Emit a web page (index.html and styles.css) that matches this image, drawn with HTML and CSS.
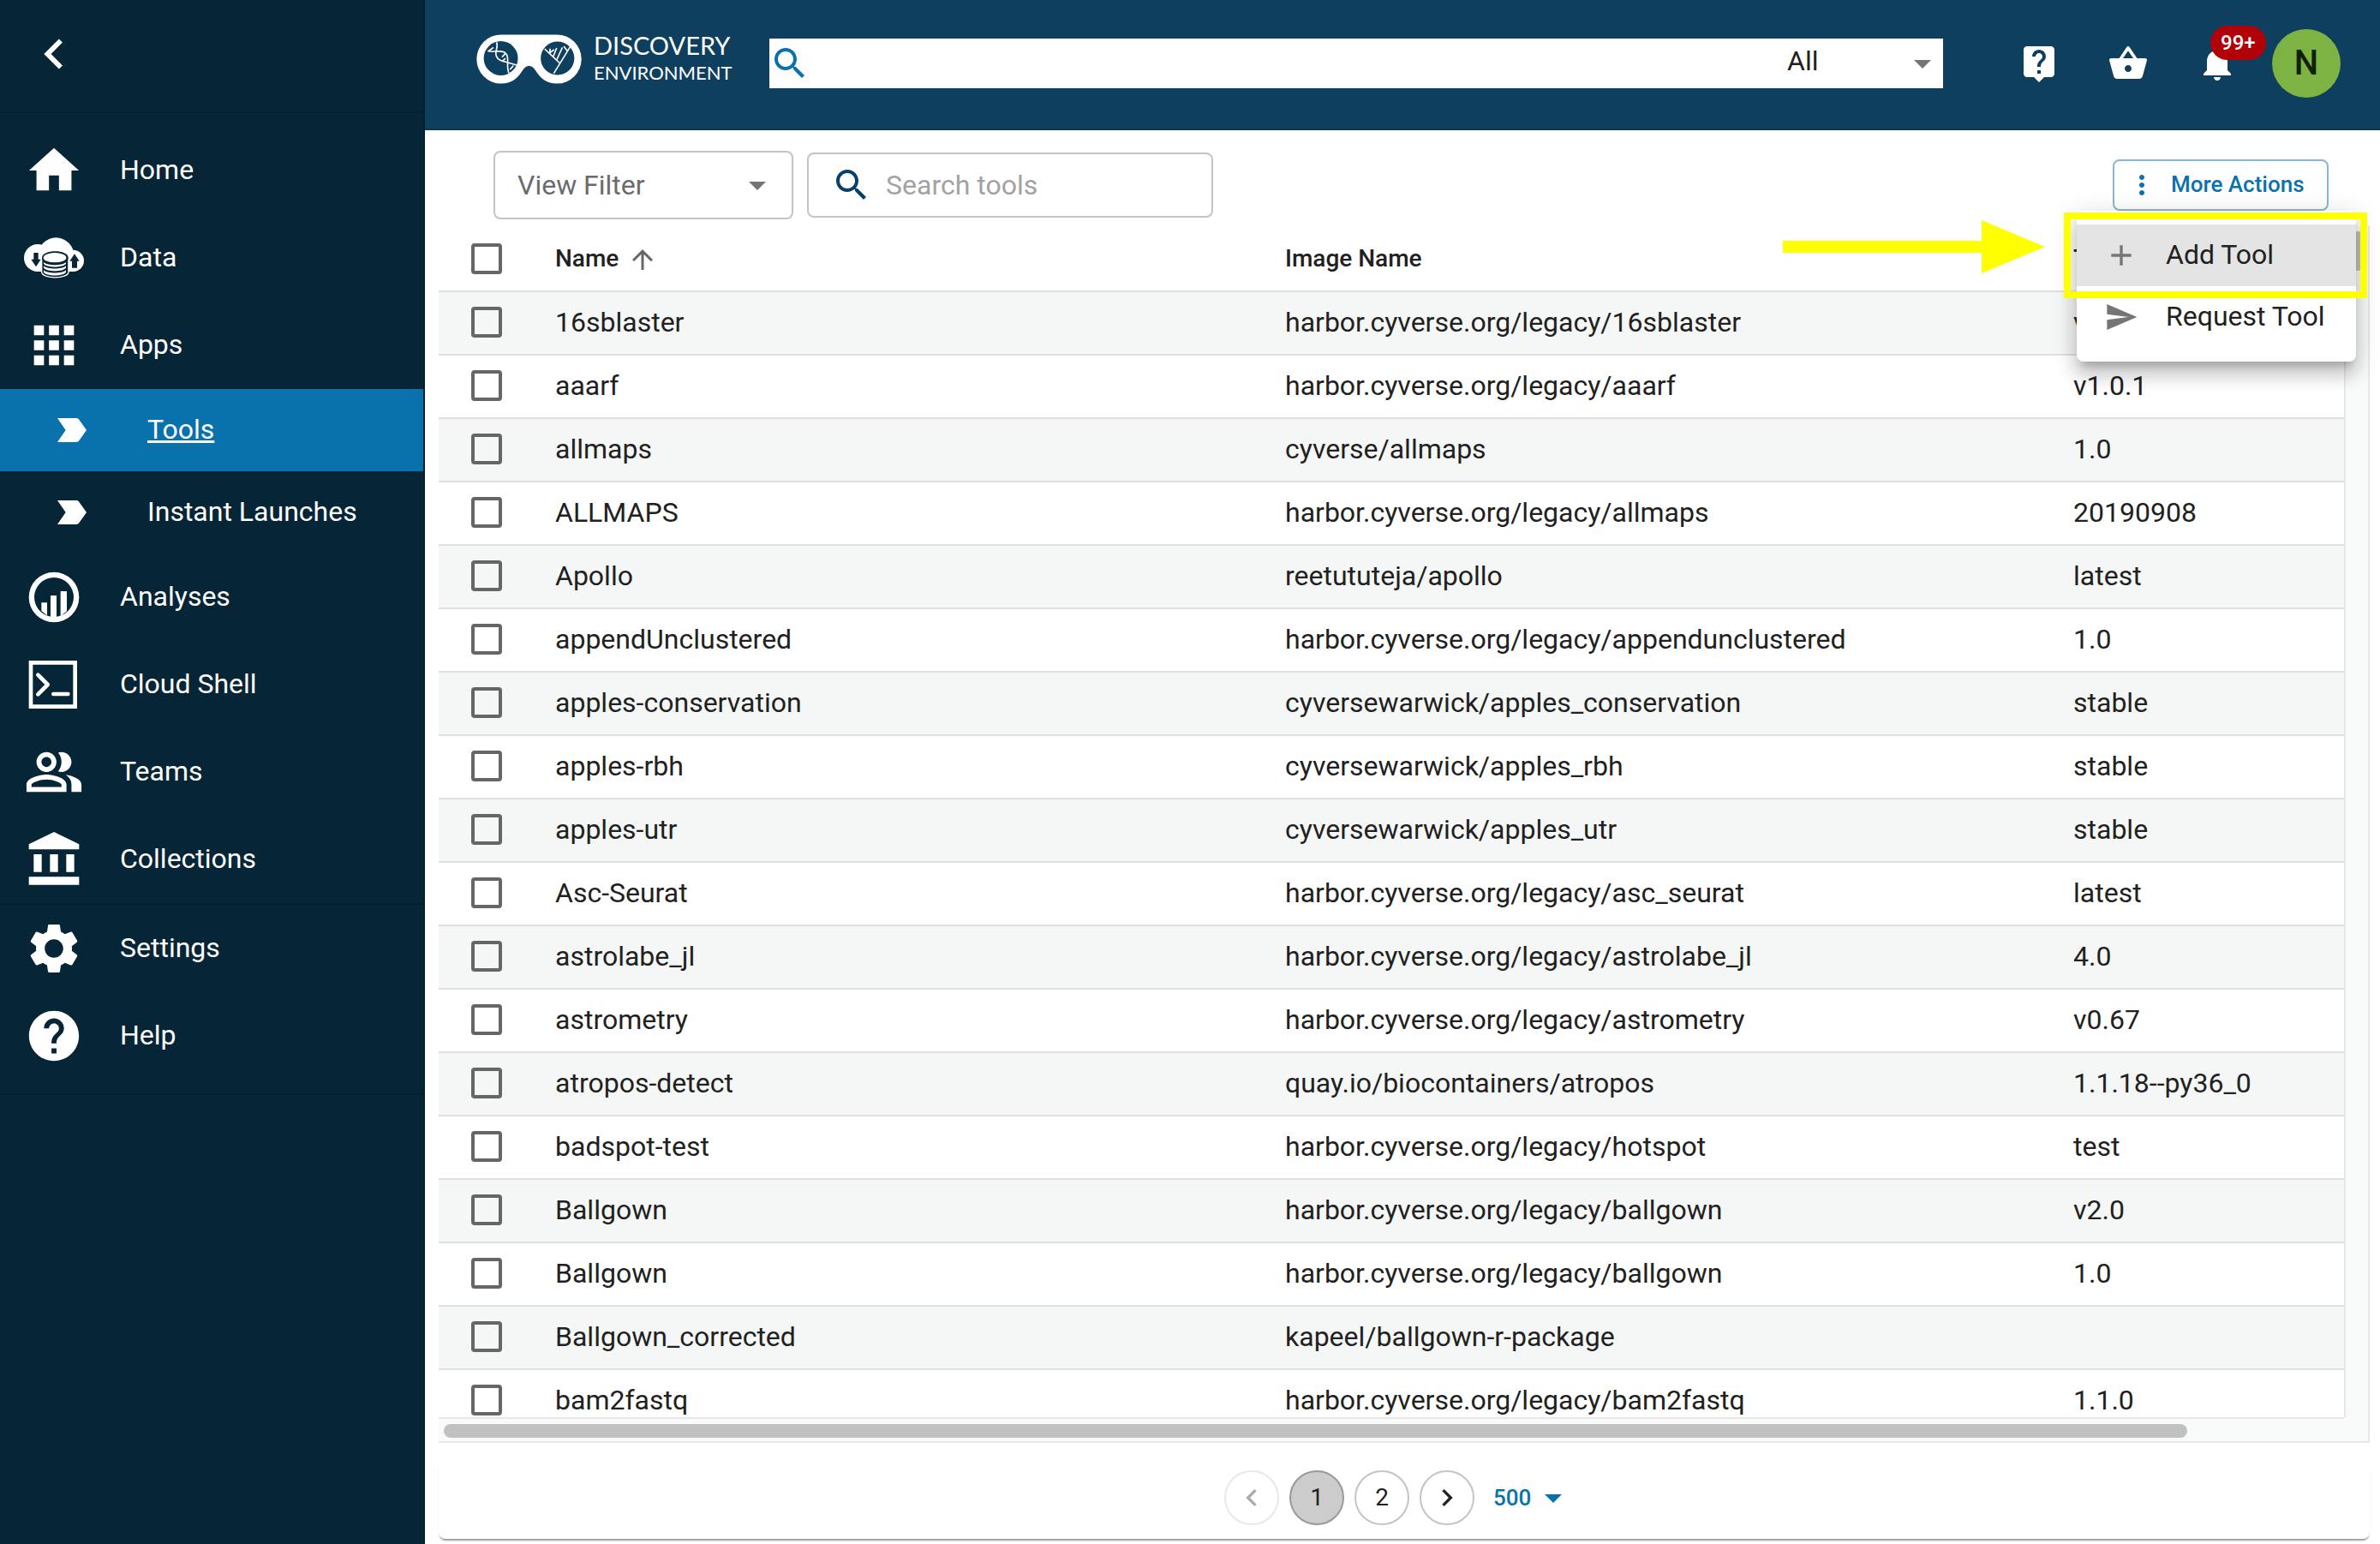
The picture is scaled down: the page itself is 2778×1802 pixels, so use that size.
FILE: index.html
```html
<!DOCTYPE html>
<html lang="en">
<head>
<meta charset="utf-8">
<title>Discovery Environment - Tools</title>
<link rel="stylesheet" href="styles.css">
</head>
<body>
<div class="app">
  <nav class="sidebar" aria-label="Main">
    <div class="sidebar-top">
      <button class="collapse" aria-label="Collapse menu"><svg class="icon-lg" viewBox="0 0 24 24"><path d="M15.41 7.41L14 6l-6 6 6 6 1.41-1.41L10.83 12z"/></svg></button>
    </div>
    <div class="nav-group nav-main">
      <a class="nav-item" href="#"><svg class="icon-lg" viewBox="0 0 24 24"><path d="M10 20v-6h4v6h5v-8h3L12 3 2 12h3v8z"/></svg><span>Home</span></a>
      <a class="nav-item" href="#"><svg class="icon-lg" viewBox="84 798 210 210">
        <circle cx="132" cy="903" r="48"/><circle cx="196" cy="895" r="63"/><circle cx="256" cy="913" r="38"/><path d="M132 900h124v51H132z"/>
        <path class="cut" d="M147 902c0-30 92-30 92 0v52c0 24-92 24-92 0z"/>
        <path class="line" d="M146 908v44c0 26 94 26 94 0v-44"/>
        <ellipse cx="192" cy="902" rx="40" ry="17"/>
        <path d="M153 918c14 13 64 13 78 0v6c-14 14-64 14-78 0zM153 931c14 13 64 13 78 0v7c-14 14-64 14-78 0zM153 946c14 13 64 13 78 0v8c-14 14-64 14-78 0z"/>
        <path class="cut" d="M118 885h16v23h9l-17 26-17-26h9zM252 938h18v-24h8l-17-25-17 25h8z"/></svg><span>Data</span></a>
      <a class="nav-item" href="#"><svg class="icon-lg" viewBox="0 0 24 24"><path d="M4 8h4V4H4v4zm6 12h4v-4h-4v4zm-6 0h4v-4H4v4zm0-6h4v-4H4v4zm6 0h4v-4h-4v4zm6-10v4h4V4h-4zm-6 4h4V4h-4v4zm6 6h4v-4h-4v4zm0 6h4v-4h-4v4z"/></svg><span>Apps</span></a>
      <a class="nav-item nav-sub active" href="#" aria-current="page"><svg class="icon" viewBox="0 0 24 24"><path d="M3.5 18.99l11 .01c.67 0 1.27-.33 1.63-.84L20.5 12l-4.37-6.16c-.36-.51-.96-.84-1.63-.84l-11 .01L8.34 12 3.5 18.99z"/></svg><span>Tools</span></a>
      <a class="nav-item nav-sub" href="#"><svg class="icon" viewBox="0 0 24 24"><path d="M3.5 18.99l11 .01c.67 0 1.27-.33 1.63-.84L20.5 12l-4.37-6.16c-.36-.51-.96-.84-1.63-.84l-11 .01L8.34 12 3.5 18.99z"/></svg><span>Instant Launches</span></a>
      <a class="nav-item" href="#"><svg class="icon-lg" viewBox="84 666 210 210"><path fill-rule="evenodd" d="M189 683a88 88 0 1 0 0 176a88 88 0 1 0 0-176zm0 19a69 69 0 1 1 0 138a69 69 0 1 1 0-138z"/><path d="M145 790h20v45l-20-16zM177 765h21v80h-21zM212 750h22v70l-22 18z"/></svg><span>Analyses</span></a>
      <a class="nav-item" href="#"><svg class="icon-lg" viewBox="84 972 210 210"><path fill-rule="evenodd" d="M101 993h169v168H101zm14 14v140h141v-140z"/><path class="stroke" d="M133 1043l34 34-34 34M187 1110h51"/></svg><span>Cloud Shell</span></a>
      <a class="nav-item" href="#"><svg class="icon-lg" viewBox="0 0 24 24"><path d="M16.67 13.13C18.04 14.06 19 15.32 19 17v3h4v-3c0-2.18-3.57-3.47-6.33-3.87zM15 12c2.21 0 4-1.79 4-4s-1.79-4-4-4c-.47 0-.91.1-1.33.24C14.5 5.27 15 6.58 15 8s-.5 2.73-1.33 3.76c.42.14.86.24 1.33.24zM9 12c2.21 0 4-1.79 4-4s-1.79-4-4-4-4 1.79-4 4 1.79 4 4 4zm0-6c1.1 0 2 .9 2 2s-.9 2-2 2-2-.9-2-2 .9-2 2-2zM9 13c-2.67 0-8 1.34-8 4v3h16v-3c0-2.66-5.33-4-8-4zm6 5H3v-.99C3.2 16.29 6.3 15 9 15s5.8 1.29 6 2v1z"/></svg><span>Teams</span></a>
      <a class="nav-item" href="#"><svg class="icon-lg" viewBox="84 264 210 210"><path d="M189 273l88 43v18H101v-18zM118 351h28v62h-28zM175 351h28v62h-28zM232 351h28v62h-28zM101 430h176v28H101z"/></svg><span>Collections</span></a>
    </div>
    <div class="nav-group nav-extra">
      <a class="nav-item" href="#"><svg class="icon-lg" viewBox="0 0 24 24"><path d="M19.14 12.94c.04-.3.06-.61.06-.94 0-.32-.02-.64-.07-.94l2.03-1.58c.18-.14.23-.41.12-.61l-1.92-3.32c-.12-.22-.37-.29-.59-.22l-2.39.96c-.5-.38-1.03-.7-1.62-.94l-.36-2.54c-.04-.24-.24-.41-.48-.41h-3.84c-.24 0-.43.17-.47.41l-.36 2.54c-.59.24-1.13.57-1.62.94l-2.39-.96c-.22-.08-.47 0-.59.22L2.74 8.87c-.12.21-.08.47.12.61l2.03 1.58c-.05.3-.09.63-.09.94s.02.64.07.94l-2.03 1.58c-.18.14-.23.41-.12.61l1.92 3.32c.12.22.37.29.59.22l2.39-.96c.5.38 1.03.7 1.62.94l.36 2.54c.05.24.24.41.48.41h3.84c.24 0 .44-.17.47-.41l.36-2.54c.59-.24 1.13-.56 1.62-.94l2.39.96c.22.08.47 0 .59-.22l1.92-3.32c.12-.22.07-.47-.12-.61l-2.01-1.58zM12 15.7c-2.04 0-3.7-1.66-3.7-3.7s1.66-3.7 3.7-3.7 3.7 1.66 3.7 3.7-1.66 3.7-3.7 3.7z"/></svg><span>Settings</span></a>
      <a class="nav-item" href="#"><svg class="icon-lg" viewBox="0 0 24 24"><path d="M12 2C6.48 2 2 6.48 2 12s4.48 10 10 10 10-4.48 10-10S17.52 2 12 2zm1 17h-2v-2h2v2zm2.07-7.75l-.9.92C13.45 12.9 13 13.5 13 15h-2v-.5c0-1.1.45-2.1 1.17-2.83l1.24-1.26c.37-.36.59-.86.59-1.41 0-1.1-.9-2-2-2s-2 .9-2 2H8c0-2.21 1.79-4 4-4s4 1.79 4 4c0 .88-.36 1.68-.93 2.25z"/></svg><span>Help</span></a>
    </div>
  </nav>

  <div class="page">
    <header class="topbar">
      <a class="brand" href="#">
        <svg class="brand-mark" viewBox="198 120 370 174">
          <path d="M285 121H481a86 86 0 0 1 0 172C445 293 425 275 410 253C400 238 394 231 383 231C372 231 366 238 356 253C341 275 321 293 285 293a86 86 0 0 1 0-172z"/>
          <circle class="lens" cx="284" cy="204" r="60"/><circle class="lens" cx="483" cy="204" r="59"/>
          <path class="drawn" d="M269 148c8 18-8 30-1 48c8 22 36 18 71 32M238 178c24 6 54-6 66 12c10 18-2 38 8 66M242 178l16-12M288 200l12-12M290 214l10-10M316 244l12-14"/>
          <path class="drawn" d="M438 171l54 51M528 163l-58 94M456 186l1-16M457 184l14-10M468 198l12-30M480 210l20-44M505 162l12 16"/>
        </svg>
        <span class="brand-name"><span class="brand-top">DISCOVERY</span><span class="brand-bottom">ENVIRONMENT</span></span>
      </a>
      <form class="global-search">
        <svg class="icon" viewBox="0 0 24 24"><path d="M15.5 14h-.79l-.28-.27C15.41 12.59 16 11.11 16 9.5 16 5.91 13.09 3 9.5 3S3 5.91 3 9.5 5.91 16 9.5 16c1.61 0 3.09-.59 4.23-1.57l.27.28v.79l5 4.99L20.49 19l-4.99-5zm-6 0C7.01 14 5 11.99 5 9.5S7.01 5 9.5 5 14 7.01 14 9.5 11.99 14 9.5 14z"/></svg>
        <input type="search" aria-label="Search">
        <span class="picker scope">
          <select aria-label="Search scope"><option>All</option></select>
          <svg class="icon" viewBox="0 0 24 24"><path d="M7 10l5 5 5-5z"/></svg>
        </span>
      </form>
      <div class="actions">
        <button class="icon-button" aria-label="Help"><svg class="icon" viewBox="0 0 24 24"><path d="M19 2H5c-1.11 0-2 .9-2 2v14c0 1.1.89 2 2 2h4l3 3 3-3h4c1.1 0 2-.9 2-2V4c0-1.1-.9-2-2-2zm-6 16h-2v-2h2v2zm2.07-7.75l-.9.92C13.45 11.9 13 12.5 13 14h-2v-.5c0-1.1.45-2.1 1.17-2.83l1.24-1.26c.37-.36.59-.86.59-1.41 0-1.1-.9-2-2-2s-2 .9-2 2H8c0-2.21 1.79-4 4-4s4 1.79 4 4c0 .88-.36 1.68-.93 2.25z"/></svg></button>
        <button class="icon-button" aria-label="Bag"><svg class="icon" viewBox="0 0 24 24"><path d="M17.21 9l-4.38-6.56c-.19-.28-.51-.42-.83-.42-.32 0-.64.14-.83.43L6.79 9H2c-.55 0-1 .45-1 1 0 .09.01.18.04.27l2.54 9.27c.23.84 1 1.46 1.92 1.46h13c.92 0 1.69-.62 1.93-1.46l2.54-9.27L23 10c0-.55-.45-1-1-1h-4.79zM9 9l3-4.4L15 9H9zm3 8c-1.1 0-2-.9-2-2s.9-2 2-2 2 .9 2 2-.9 2-2 2z"/></svg></button>
        <button class="icon-button" aria-label="Notifications"><svg class="icon" viewBox="0 0 24 24"><path d="M12 22c1.1 0 2-.9 2-2h-4c0 1.1.89 2 2 2zm6-6v-5c0-3.07-1.64-5.64-4.5-6.32V4c0-.83-.67-1.5-1.5-1.5s-1.5.67-1.5 1.5v.68C7.63 5.36 6 7.92 6 11v5l-2 2v1h16v-1l-2-2z"/></svg><span class="badge">99+</span></button>
        <button class="avatar" aria-label="Account">N</button>
      </div>
    </header>

    <main class="content">
      <div class="toolbar">
        <span class="picker filter">
          <select aria-label="View Filter"><option>View Filter</option></select>
          <svg class="icon" viewBox="0 0 24 24"><path d="M7 10l5 5 5-5z"/></svg>
        </span>
        <label class="tool-search">
          <svg class="icon" viewBox="0 0 24 24"><path d="M15.5 14h-.79l-.28-.27C15.41 12.59 16 11.11 16 9.5 16 5.91 13.09 3 9.5 3S3 5.91 3 9.5 5.91 16 9.5 16c1.61 0 3.09-.59 4.23-1.57l.27.28v.79l5 4.99L20.49 19l-4.99-5zm-6 0C7.01 14 5 11.99 5 9.5S7.01 5 9.5 5 14 7.01 14 9.5 11.99 14 9.5 14z"/></svg>
          <input type="text" placeholder="Search tools" aria-label="Search tools">
        </label>
        <div class="more">
          <button class="more-button" aria-haspopup="menu" aria-expanded="true"><svg class="icon-sm" viewBox="0 0 24 24"><path d="M12 8c1.1 0 2-.9 2-2s-.9-2-2-2-2 .9-2 2 .9 2 2 2zm0 2c-1.1 0-2 .9-2 2s.9 2 2 2 2-.9 2-2-.9-2-2-2zm0 6c-1.1 0-2 .9-2 2s.9 2 2 2 2-.9 2-2-.9-2-2-2z"/></svg><span>More Actions</span></button>
          <div class="menu" role="menu">
            <button class="menu-item selected" role="menuitem"><svg viewBox="0 0 24 24"><path d="M19 13h-6v6h-2v-6H5v-2h6V5h2v6h6v2z"/></svg><span>Add Tool</span></button>
            <button class="menu-item" role="menuitem"><svg viewBox="0 0 24 24"><path d="M2.01 21L23 12 2.01 3 2 10l15 2-15 2z"/></svg><span>Request Tool</span></button>
          </div>
          <div class="highlight"></div>
          <svg class="pointer" viewBox="0 0 306 62"><path d="M0 24h232V0l74 31-74 31V38H0z"/></svg>
        </div>
      </div>

      <div class="table-frame">
        <div class="table-view">
          <table>
            <colgroup><col class="col-check"><col class="col-name"><col class="col-image"><col class="col-tag"></colgroup>
            <thead><tr><th><input type="checkbox" aria-label="Select all"></th><th>Name<svg class="icon-sm" viewBox="0 0 24 24"><path d="M4 12l1.41 1.41L11 7.83V20h2V7.83l5.58 5.59L20 12l-8-8-8 8z"/></svg></th><th>Image Name</th><th>Tag</th></tr></thead>
            <tbody>
              <tr><td><input type="checkbox" aria-label="16sblaster"></td><td>16sblaster</td><td>harbor.cyverse.org/legacy/16sblaster</td><td>v1.0</td></tr>
              <tr><td><input type="checkbox" aria-label="aaarf"></td><td>aaarf</td><td>harbor.cyverse.org/legacy/aaarf</td><td>v1.0.1</td></tr>
              <tr><td><input type="checkbox" aria-label="allmaps"></td><td>allmaps</td><td>cyverse/allmaps</td><td>1.0</td></tr>
              <tr><td><input type="checkbox" aria-label="ALLMAPS"></td><td>ALLMAPS</td><td>harbor.cyverse.org/legacy/allmaps</td><td>20190908</td></tr>
              <tr><td><input type="checkbox" aria-label="Apollo"></td><td>Apollo</td><td>reetututeja/apollo</td><td>latest</td></tr>
              <tr><td><input type="checkbox" aria-label="appendUnclustered"></td><td>appendUnclustered</td><td>harbor.cyverse.org/legacy/appendunclustered</td><td>1.0</td></tr>
              <tr><td><input type="checkbox" aria-label="apples-conservation"></td><td>apples-conservation</td><td>cyversewarwick/apples_conservation</td><td>stable</td></tr>
              <tr><td><input type="checkbox" aria-label="apples-rbh"></td><td>apples-rbh</td><td>cyversewarwick/apples_rbh</td><td>stable</td></tr>
              <tr><td><input type="checkbox" aria-label="apples-utr"></td><td>apples-utr</td><td>cyversewarwick/apples_utr</td><td>stable</td></tr>
              <tr><td><input type="checkbox" aria-label="Asc-Seurat"></td><td>Asc-Seurat</td><td>harbor.cyverse.org/legacy/asc_seurat</td><td>latest</td></tr>
              <tr><td><input type="checkbox" aria-label="astrolabe_jl"></td><td>astrolabe_jl</td><td>harbor.cyverse.org/legacy/astrolabe_jl</td><td>4.0</td></tr>
              <tr><td><input type="checkbox" aria-label="astrometry"></td><td>astrometry</td><td>harbor.cyverse.org/legacy/astrometry</td><td>v0.67</td></tr>
              <tr><td><input type="checkbox" aria-label="atropos-detect"></td><td>atropos-detect</td><td>quay.io/biocontainers/atropos</td><td>1.1.18--py36_0</td></tr>
              <tr><td><input type="checkbox" aria-label="badspot-test"></td><td>badspot-test</td><td>harbor.cyverse.org/legacy/hotspot</td><td>test</td></tr>
              <tr><td><input type="checkbox" aria-label="Ballgown v2.0"></td><td>Ballgown</td><td>harbor.cyverse.org/legacy/ballgown</td><td>v2.0</td></tr>
              <tr><td><input type="checkbox" aria-label="Ballgown 1.0"></td><td>Ballgown</td><td>harbor.cyverse.org/legacy/ballgown</td><td>1.0</td></tr>
              <tr><td><input type="checkbox" aria-label="Ballgown_corrected"></td><td>Ballgown_corrected</td><td>kapeel/ballgown-r-package</td><td></td></tr>
              <tr><td><input type="checkbox" aria-label="bam2fastq"></td><td>bam2fastq</td><td>harbor.cyverse.org/legacy/bam2fastq</td><td>1.1.0</td></tr>
            </tbody>
          </table>
        </div>
        <div class="track-v"><div class="thumb-v"></div></div>
        <div class="track-h"><div class="thumb-h"></div></div>
        <div class="track-corner"></div>
      </div>

      <div class="pager">
        <button class="page-button" aria-label="Previous page" disabled><svg viewBox="0 0 24 24"><path d="M15.41 7.41L14 6l-6 6 6 6 1.41-1.41L10.83 12z"/></svg></button>
        <button class="page-button current">1</button>
        <button class="page-button">2</button>
        <button class="page-button" aria-label="Next page"><svg viewBox="0 0 24 24"><path d="M10 6L8.59 7.41 13.17 12l-4.58 4.59L10 18l6-6z"/></svg></button>
        <span class="picker rows">
          <select aria-label="Rows per page"><option>500</option></select>
          <svg class="icon" viewBox="0 0 24 24"><path d="M7 10l5 5 5-5z"/></svg>
        </span>
      </div>
    </main>
  </div>
</div>
</body>
</html>
```
FILE: styles.css
```css
* { box-sizing: border-box; }

body {
  margin: 0;
  background: #fff;
  color: #212121;
  font: 32px/46px Roboto, sans-serif;
}

button, input, select { font: inherit; color: inherit; margin: 0; padding: 0; border: 0; background: none; letter-spacing: inherit; }
select { appearance: none; outline: 0; }
svg { display: block; flex: none; fill: currentColor; }
a { color: inherit; text-decoration: none; }

.icon { width: 48px; height: 48px; }
.icon-lg { width: 70px; height: 70px; }
.icon-sm { width: 36px; height: 36px; }

.app { display: flex; height: 100vh; overflow: hidden; }

/* Sidebar */
.sidebar { flex: none; width: 496px; background: #062536; color: #fff; border-right: 2px solid #061f2e; }
.sidebar-top { height: 132px; padding: 28px; border-bottom: 2px solid #061f2e; }
.collapse { display: block; }
.nav-main { padding-top: 16px; }
.nav-extra { padding-bottom: 16px; border-bottom: 2px solid #061f2e; border-top: 2px solid #061f2e; }
.nav-item { display: flex; align-items: center; gap: 42px; height: 102px; padding-left: 28px; }
.nav-item span, .menu-item span, .more-button span { padding-bottom: 2px; }
.nav-sub { height: 96px; gap: 64px; padding-left: 60px; }
.nav-item.active { background: #0971ab; text-decoration: underline; }
.cut { fill: #062536; }
.line { fill: none; stroke: #fff; stroke-width: 4; }
.stroke { fill: none; stroke: #fff; stroke-width: 14; stroke-linecap: round; stroke-linejoin: round; }

/* Top bar */
.page { flex: 1; min-width: 0; display: flex; flex-direction: column; }
.topbar { flex: none; display: flex; align-items: center; height: 152px; padding: 0 46px 2px 60px; background: #0e3f5f; border-bottom: 2px solid #0c3654; color: #fff; }
.brand { flex: none; display: flex; align-items: center; gap: 14px; width: 342px; padding-bottom: 10px; }
.brand-mark { width: 123px; height: 58px; }
.lens { fill: #0e3f5f; }
.drawn { fill: none; stroke: #fff; stroke-width: 5; }
.brand-name { display: flex; flex-direction: column; padding-bottom: 4px; font-family: Lato, sans-serif; }
.brand-top { font-size: 29px; line-height: 36px; }
.brand-bottom { font-size: 22px; line-height: 28px; }
.global-search { flex: 1; min-width: 0; display: flex; align-items: center; height: 58px; background: #fff; color: #212121; }
.global-search > .icon { color: #0971ab; }
.global-search input { flex: 1; min-width: 0; height: 48px; outline: 0; }

.picker { display: grid; align-items: center; }
.picker > * { grid-area: 1 / 1; }
.picker > svg { justify-self: end; pointer-events: none; color: #757575; }
.scope { width: 182px; }
.scope select { padding-bottom: 6px; }

.actions { flex: none; display: flex; align-items: center; gap: 8px; padding-left: 64px; }
.icon-button { position: relative; display: grid; place-items: center; width: 96px; height: 96px; }
.badge { position: absolute; left: 40px; top: 4px; min-width: 64px; height: 40px; padding: 0 12px; border-radius: 20px; background: #b00208; font-size: 24px; line-height: 40px; font-weight: 500; }
.avatar { width: 80px; height: 80px; margin-left: 8px; border-radius: 50%; background: #7cb342; color: #12200a; font-size: 40px; font-weight: 500; }

/* Tools toolbar */
.content { flex: 1; min-height: 0; display: flex; flex-direction: column; padding: 24px 12px 6px 16px; }
.toolbar { display: flex; align-items: center; gap: 16px; height: 80px; padding: 0 48px 0 64px; margin-bottom: 8px; }
.filter { width: 350px; height: 80px; border: 2px solid #c4c4c4; border-radius: 8px; color: #6b6b6b; padding: 0 16px 0 26px; }
.filter select { height: 76px; }
.tool-search { display: flex; align-items: center; gap: 16px; width: 474px; height: 76px; padding: 0 26px; border: 2px solid #c4c4c4; border-radius: 8px; }
.tool-search .icon { color: #08406b; }
.tool-search input { flex: 1; min-width: 0; height: 60px; outline: 0; }
.tool-search input::placeholder { color: #a2a2a2; opacity: 1; }
.more { position: relative; margin-left: auto; }
.more-button { display: flex; align-items: center; gap: 16px; width: 252px; height: 60px; padding-left: 14px; border: 2px solid #8bb6d3; border-radius: 8px; color: #0971ab; font-size: 26px; font-weight: 500; white-space: nowrap; }
.menu { position: absolute; z-index: 2; top: 60px; right: -32px; width: 326px; padding: 16px 0; border-radius: 8px; background: #fff; box-shadow: 0 10px 10px -6px rgba(0,0,0,.2), 0 16px 20px 2px rgba(0,0,0,.14), 0 6px 28px 4px rgba(0,0,0,.12); }
.menu-item { display: flex; align-items: center; gap: 32px; width: 100%; height: 72px; padding: 0 32px; white-space: nowrap; }
.menu-item svg { width: 40px; height: 40px; color: #757575; }
.menu-item.selected { background: #e4e4e4; }
.highlight { position: absolute; z-index: 3; top: 62px; right: -45px; width: 354px; height: 100px; border: 8px solid #ff0; }
.pointer { position: absolute; z-index: 3; top: 71px; right: 331px; width: 306px; height: 62px; fill: #ff0; }

/* Tools table */
.table-frame { flex: 1; min-height: 0; display: grid; grid-template: minmax(0, 1fr) 30px / minmax(0, 1fr) 30px; }
.table-view { overflow: hidden; }
table { width: 100%; border-collapse: separate; border-spacing: 0; table-layout: fixed; }
.col-check { width: 120px; }
.col-name { width: 852px; }
.col-image { width: 920px; }
th, td { height: 74px; padding: 0 16px 2px; border-bottom: 2px solid #e0e0e0; text-align: left; white-space: nowrap; }
th { height: 77px; padding: 0 16px; font-size: 28px; font-weight: 500; }
th svg { display: inline-block; vertical-align: middle; margin-left: 10px; color: #666; }
th:first-child, td:first-child { padding-left: 38px; }
tbody tr:nth-child(odd) { background: #f5f7f6; }
input[type="checkbox"] { appearance: none; display: block; width: 36px; height: 36px; border: 4px solid #666; border-radius: 4px; }
.track-v { background: #f9fbfa; border: 2px solid #e8e8e8; border-width: 0 2px; padding: 6px 0 0 6px; }
.thumb-v { width: 16px; height: 46px; border-radius: 8px; background: #c1c1c1; }
.track-h { background: #f9fbfa; border: 2px solid #e8e8e8; border-width: 2px 0; padding: 6px; }
.thumb-h { width: 92%; height: 16px; border-radius: 8px; background: #c1c1c1; }
.track-corner { background: #f9fbfa; border: 2px solid #e8e8e8; border-width: 0 2px 2px 0; }

/* Pagination */
.pager { flex: none; display: flex; align-items: center; justify-content: center; gap: 12px; height: 96px; margin-top: 16px; border-radius: 8px; box-shadow: 0 3px 2px -1px rgba(0,0,0,.4); font-size: 28px; }
.page-button { display: grid; place-items: center; width: 64px; height: 64px; border: 2px solid #c4c4c4; border-radius: 50%; }
.page-button svg { width: 40px; height: 40px; }
.page-button:disabled { border-color: #e8e8e8; color: #aaa; }
.page-button.current { background: #ccc; border-color: #999; }
.rows { width: 116px; padding: 0 12px 0 10px; color: #0971ab; font-size: 26px; font-weight: 500; }
.rows > svg { color: #0971ab; }
```
